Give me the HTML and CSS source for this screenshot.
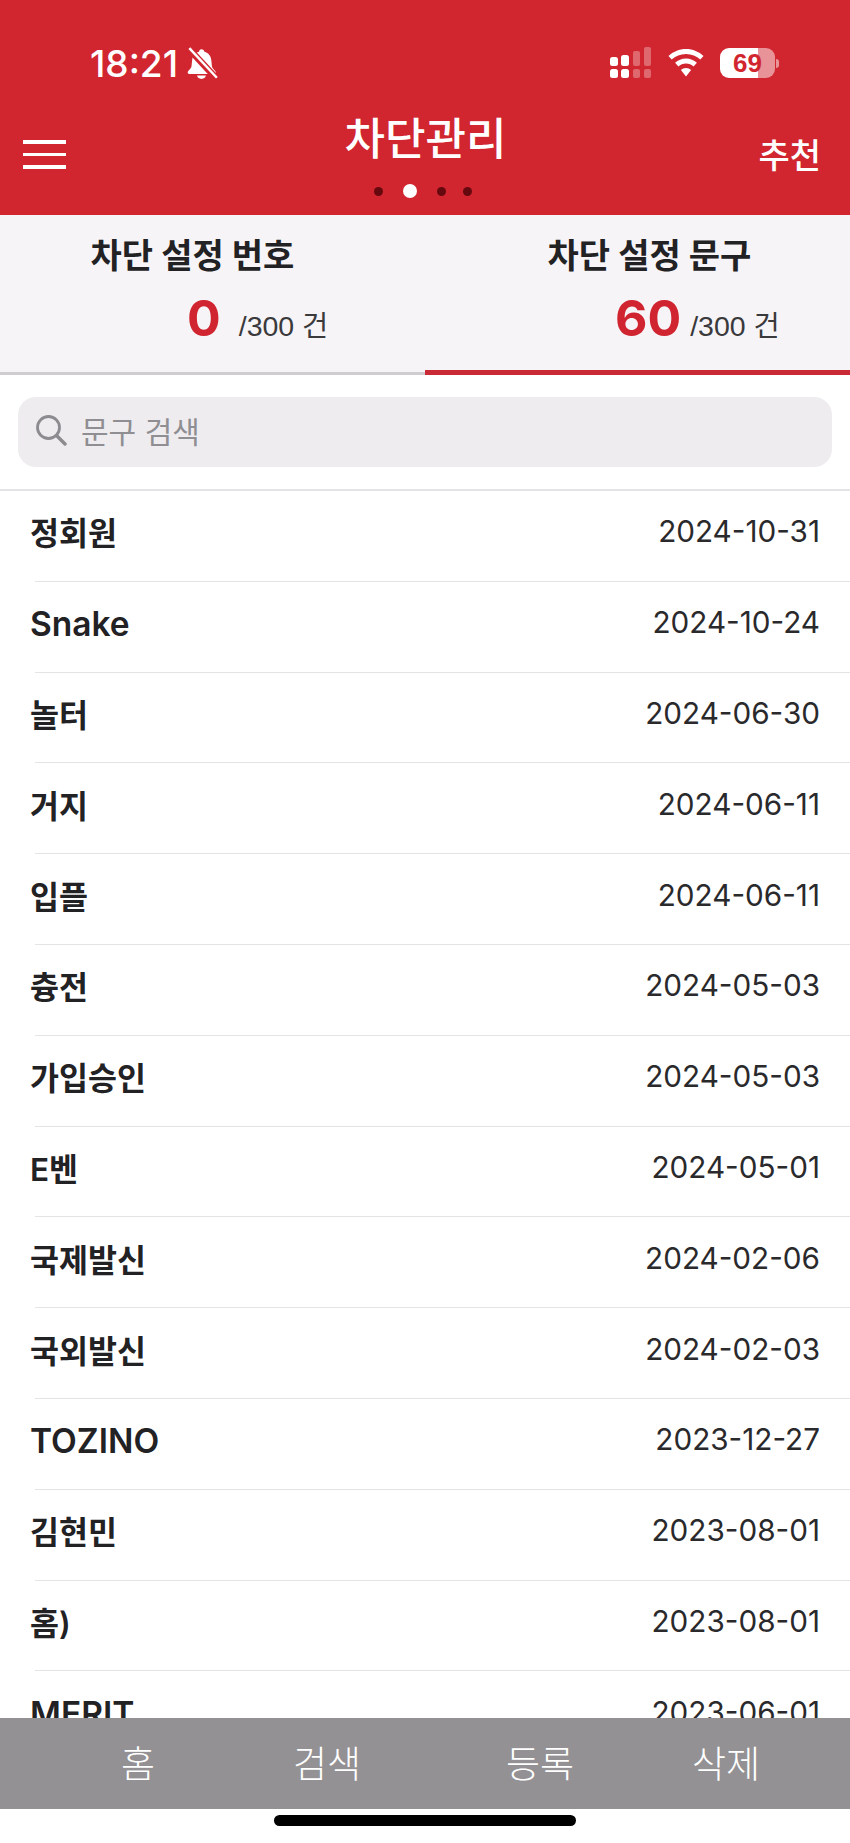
FILE: index.html
```html
<!DOCTYPE html>
<html lang="ko">

<head>
    <meta charset="UTF-8">
    <title>차단관리</title>
    <link rel="stylesheet" href="styles.css">
</head>

<body>
    <div class="app">
        <header class="header">
            <div class="status">
                <div class="status-left">
                    <span class="time">18:21</span>
                    <svg class="bell" width="32" height="33" viewBox="0 0 29 30">
                        <path d="M14 2c1.500 0 2.500 1 2.700 2.300 3.800 1 6 4 6.300 8l.5 5c.2 1.800 1.500 3 3 4.500 1 1 .5 2.700-1 2.700H3c-1.500 0-2-1.700-1-2.700 1.500-1.500 2.800-2.700 3-4.500l.5-5c.3-4 2.500-7 6.300-8C12 3 12.500 2 14 2z" fill="#fff"/>
                        <path d="M10 26h8c-.3 2-2 3-4 3s-3.700-1-4-3z" fill="#fff"/>
                        <path d="M2 1l25 27" stroke="#d12630" stroke-width="6"/>
                        <path d="M3 1l25 27" stroke="#fff" stroke-width="2.200"/>
                    </svg>
                </div>
                <div class="status-right">
                    <svg width="44" height="32" viewBox="0 0 44 32">
                        <g fill="#fff">
                            <rect x="1" y="10" width="8" height="9" rx="2.500"/>
                            <rect x="12" y="8" width="8" height="11" rx="2.500"/>
                            <rect x="1" y="22" width="8" height="9" rx="2.500"/>
                            <rect x="12" y="22" width="8" height="9" rx="2.500"/>
                        </g>
                        <g fill="#fff" opacity="0.3">
                            <rect x="24" y="4" width="7" height="15" rx="2"/>
                            <rect x="35" y="0" width="7" height="19" rx="2"/>
                            <rect x="24" y="22" width="7" height="9" rx="2"/>
                            <rect x="35" y="22" width="7" height="9" rx="2"/>
                        </g>
                    </svg>
                    <svg class="wifi" width="36" height="28" viewBox="0 0 36 28">
                        <path d="M18 0c6.800 0 13 2.700 17.500 7l-3.200 3.600C28.600 7 23.500 4.900 18 4.900S7.400 7 3.700 10.600L.5 7C5 2.700 11.200 0 18 0z" fill="#fff"/>
                        <path d="M18 9.500c4.200 0 8 1.600 10.900 4.300l-3.300 3.600c-2-1.900-4.700-3-7.600-3s-5.600 1.100-7.600 3l-3.300-3.600C10 11.100 13.800 9.500 18 9.500z" fill="#fff"/>
                        <path d="M18 19c2 0 3.800.8 5.100 2L18 27.500 12.900 21c1.300-1.200 3.100-2 5.100-2z" fill="#fff"/>
                    </svg>
                    <div class="battery"><span class="battery-level">69</span></div>
                    <div class="battery-tip"></div>
                </div>
            </div>
            <div class="nav">
                <div class="menu"><i></i><i></i><i></i></div>
                <div class="title">차단관리</div>
                <div class="recommend">추천</div>
            </div>
            <div class="dots">
                <i></i><i class="on"></i><i></i><i></i>
            </div>
        </header>

        <div class="tabs">
            <div class="tab tab-number">
                <div class="tab-title">차단 설정 번호</div>
                <div class="tab-count"><b>0</b><span>/300 건</span></div>
            </div>
            <div class="tab tab-phrase">
                <div class="tab-title">차단 설정 문구</div>
                <div class="tab-count"><b>60</b><span>/300 건</span></div>
            </div>
        </div>

        <div class="search-wrap">
            <div class="search">
                <svg width="32" height="32" viewBox="0 0 32 32">
                    <circle cx="13.500" cy="13.500" r="11" fill="none" stroke="#8c8b8f" stroke-width="2.800"/>
                    <path d="M21.500 21.500l8.500 8.500" stroke="#8c8b8f" stroke-width="3.400" stroke-linecap="round"/>
                </svg>
                <span>문구 검색</span>
            </div>
        </div>

        <div class="list">
            <div class="row"><span class="name">정회원</span><span class="date">2024-10-31</span></div>
            <div class="row"><span class="name latin">Snake</span><span class="date">2024-10-24</span></div>
            <div class="row"><span class="name">놀터</span><span class="date">2024-06-30</span></div>
            <div class="row"><span class="name">거지</span><span class="date">2024-06-11</span></div>
            <div class="row"><span class="name">입플</span><span class="date">2024-06-11</span></div>
            <div class="row"><span class="name">츙전</span><span class="date">2024-05-03</span></div>
            <div class="row"><span class="name">가입승인</span><span class="date">2024-05-03</span></div>
            <div class="row"><span class="name">E벤</span><span class="date">2024-05-01</span></div>
            <div class="row"><span class="name">국제발신</span><span class="date">2024-02-06</span></div>
            <div class="row"><span class="name">국외발신</span><span class="date">2024-02-03</span></div>
            <div class="row"><span class="name latin">TOZINO</span><span class="date">2023-12-27</span></div>
            <div class="row"><span class="name">김현민</span><span class="date">2023-08-01</span></div>
            <div class="row"><span class="name">홈)</span><span class="date">2023-08-01</span></div>
            <div class="row"><span class="name latin">MERIT</span><span class="date">2023-06-01</span></div>
        </div>

        <div class="bottom-bar">
            <span>홈</span>
            <span>검색</span>
            <span>등록</span>
            <span>삭제</span>
        </div>
        <div class="home-area">
            <div class="home-indicator"></div>
        </div>
    </div>
</body>

</html>
```

FILE: styles.css
```css
* {
    box-sizing: border-box;
}

body {
    margin: 0;
    background-color: #fff;
    color: #222124;
    font-family: Inter, "Noto Sans CJK KR", sans-serif;
}

.app {
    display: flex;
    flex-direction: column;
    height: 1843px;
    overflow: hidden;
}

/* cabecera roja */
.header {
    height: 215px;
    flex: none;
    padding-top: 46px;
    background-color: #d12630;
    color: #fff;
}

.status {
    display: flex;
    justify-content: space-between;
    height: 34px;
    padding: 0 71px 0 90px;
}

.status-left {
    display: flex;
    align-items: center;
    gap: 8px;
}

.time {
    font-size: 37px;
    font-weight: 500;
}

.status-right {
    display: flex;
    align-items: center;
}

.wifi {
    margin: 0 16px 0 15px;
}

.battery {
    width: 55px;
    height: 30px;
    border-radius: 9px;
    background: linear-gradient(90deg, #fff 0 38px, rgba(255, 255, 255, 0.5) 38px);
    color: #d12630;
    font: bold 26px/30px "Liberation Sans", sans-serif;
    text-align: center;
}

.battery-tip {
    width: 3px;
    height: 9px;
    margin-left: 1px;
    border-radius: 0 3px 3px 0;
    background-color: rgba(255, 255, 255, 0.5);
}

.nav {
    display: grid;
    grid-template-columns: 1fr auto 1fr;
    align-items: start;
    height: 100px;
    padding: 0 29px 0 30px;
}

.menu {
    display: flex;
    flex-direction: column;
    gap: 9px;
    width: 43px;
    margin: 60px 0 0 -7px;
}

.menu i {
    height: 3.700px;
    background-color: #fff;
}

.title {
    margin-top: 29px;
    font-size: 44px;
    font-weight: 500;
    line-height: 60px;
}

.recommend {
    justify-self: end;
    margin-top: 56px;
    font-size: 34px;
    font-weight: 500;
    line-height: 40px;
}

.dots {
    display: flex;
    align-items: center;
    height: 14px;
    margin-top: 4px;
    padding-left: 374px;
}

.dots i {
    width: 9px;
    height: 9px;
    margin-right: 20px;
    border-radius: 50%;
    background-color: #66090f;
}

.dots .on {
    width: 14px;
    height: 14px;
    margin-right: 20px;
    background-color: #fff;
}

.dots i:nth-child(3) {
    margin-right: 17px;
}

/* pestañas */
.tabs {
    display: flex;
    flex: none;
    height: 160px;
    background-color: #f6f4f6;
}

.tab {
    width: 50%;
    border-bottom: 3px solid #cfcdcf;
}

.tab-phrase {
    border-bottom: 5px solid #c92a36;
}

.tab-title {
    padding-top: 19px;
    font-size: 34px;
    font-weight: 700;
    line-height: 44px;
    text-align: center;
}

.tab-number .tab-title {
    padding-right: 40px;
}

.tab-phrase .tab-title {
    padding-left: 24px;
}

.tab-count {
    display: flex;
    align-items: baseline;
    margin-top: 10px;
    font-family: "Liberation Sans", "Noto Sans CJK KR", sans-serif;
    line-height: 60px;
}

.tab-count b {
    color: #d02430;
    font-family: Inter, sans-serif;
    font-size: 50px;
}

.tab-count span {
    color: #3a393c;
    font-size: 28.500px;
}

.tab-number .tab-count {
    padding-left: 187px;
}

.tab-number .tab-count span {
    margin-left: 18px;
}

.tab-phrase .tab-count {
    padding-left: 190px;
}

.tab-phrase .tab-count span {
    margin-left: 9px;
}

/* buscador */
.search-wrap {
    flex: none;
    height: 116px;
    padding: 22px 18px 0;
    border-bottom: 2px solid #e4e3e5;
}

.search {
    display: flex;
    align-items: center;
    gap: 14px;
    height: 70px;
    padding: 0 0 4px 17px;
    border-radius: 18px;
    background-color: #eeecef;
    color: #8f8e92;
    font-size: 30px;
}

/* lista */
.list {
    flex: 1;
    overflow: hidden;
}

.row {
    display: flex;
    justify-content: space-between;
    align-items: center;
    height: 90.800px;
    margin-left: 35px;
    padding: 0 30px 9px 0;
    border-bottom: 1.500px solid #e4e3e5;
}

.name {
    margin-left: -5px;
    font-size: 31.500px;
    font-weight: 600;
}

.latin {
    margin-top: 4px;
    font-size: 33.500px;
}

.date {
    color: #2a292c;
    font-size: 29.700px;
}

/* barra inferior */
.bottom-bar {
    display: grid;
    flex: none;
    grid-template-columns: 196px 182px 244px 128px;
    align-items: center;
    height: 91px;
    padding: 0 60px 3px 40px;
    background-color: #939194;
    color: #fff;
    font-size: 37px;
    font-weight: 300;
    text-align: center;
}

.home-area {
    flex: none;
    height: 34px;
    padding-top: 6px;
}

.home-indicator {
    width: 302px;
    height: 11px;
    margin-left: 274px;
    border-radius: 6px;
    background-color: #000;
}
```
